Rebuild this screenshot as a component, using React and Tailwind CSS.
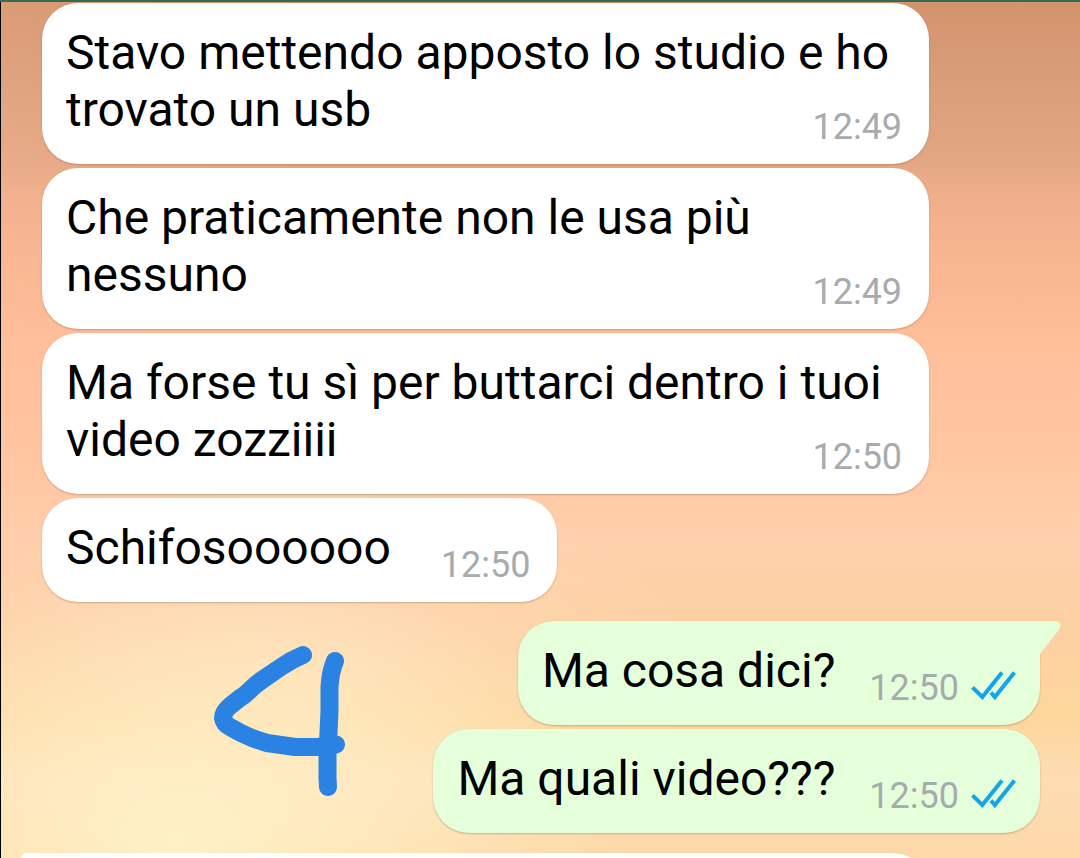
import React from 'react';
import clsx from 'clsx';

const messages = [
    { id: 1, from: 'them', text: 'Stavo mettendo apposto lo studio e ho trovato un usb', time: '12:49' },
    { id: 2, from: 'them', text: 'Che praticamente non le usa più nessuno', time: '12:49' },
    { id: 3, from: 'them', text: 'Ma forse tu sì per buttarci dentro i tuoi video zozziiii', time: '12:50' },
    { id: 4, from: 'them', text: 'Schifosoooooo', time: '12:50' },
    { id: 5, from: 'me', text: 'Ma cosa dici?', time: '12:50', first: true },
    { id: 6, from: 'me', text: 'Ma quali video???', time: '12:50' },
];

const ReadTicks = () => (
    <svg
        className="w-[45px] h-[34px]"
        viewBox="0 0 45 34"
        fill="none"
        stroke="#12a5ea"
        strokeWidth="4"
        role="img"
        aria-label="Letto"
    >
        <path d="M1.5 16.3 L11.3 26 L31 1.5" />
        <path d="M20 21.5 L23.8 26 L43.5 1.5" />
    </svg>
);

const Tail = ({ side }) => (
    <svg
        className={clsx(
            'absolute top-0 w-[22px] h-[34px]',
            side === 'right' ? '-right-[21px]' : '-left-[21px] -scale-x-100'
        )}
        viewBox="0 0 22 34"
        fill={side === 'right' ? '#e5ffdb' : '#ffffff'}
        aria-hidden="true"
    >
        <path d="M0 0 H17 Q21 0.5 21.3 4 Q21.3 6.5 20 8.5 L1 33 H0 Z" />
    </svg>
);

const Bubble = ({ message }) => {
    const mine = message.from === 'me';

    return (
        <div
            className={clsx(
                'relative max-w-8/9 pt-[21px] pb-[17px] pl-6 shadow-[0_1px_2px_rgba(120,80,40,0.35)]',
                mine ? 'self-end bg-[#e5ffdb] pr-6' : 'self-start bg-white pr-[27px]',
                message.first ? 'rounded-[36px] rounded-tr-none mt-[15px]' : 'rounded-[36px]'
            )}
        >
            {message.first && <Tail side="right" />}
            <p className="text-[48px] leading-[57px] text-black">
                {message.text}
                <span
                    className={clsx(
                        'float-right mt-[26px] flex items-center gap-3 text-[36px] leading-10 text-[#a6abae]',
                        mine ? 'ml-[34px]' : 'ml-[50px]'
                    )}
                >
                    <time>{message.time}</time>
                    {mine && <ReadTicks />}
                </span>
            </p>
        </div>
    );
};

// Freehand "4" drawn over the chat
const Scribble = () => (
    <svg
        className="absolute left-[210px] top-[638px] w-[140px] h-[160px]"
        viewBox="210 640 140 160"
        fill="none"
        stroke="#2a83e2"
        strokeWidth="18"
        strokeLinecap="round"
        strokeLinejoin="round"
        aria-hidden="true"
    >
        <path d="M303 655 Q291 660 281 667 L262 680 Q256 684 250 690 Q245 695 240 698 L230 706 Q223 712 223 718 Q224 724 230 727 Q240 733 252 738 Q260 741 267 743 L295 747 H318 L336 744.5" />
        <path d="M335 661 Q330.5 671 329.500 687 V710 L328.500 733 L327.500 753 V778 L328 787" />
    </svg>
);

const App = () => {
    return (
        <main className="relative h-screen overflow-hidden border-t-2 border-t-[#356b50] bg-[radial-gradient(ellipse_460px_280px_at_16%_98%,rgba(255,248,205,0.8),transparent),radial-gradient(ellipse_420px_200px_at_26%_78%,rgba(255,232,205,0.5),transparent),linear-gradient(to_right,rgba(255,190,160,0.18),transparent_30%),linear-gradient(to_bottom,#d2946d_0%,#d99d78_9%,#e4a784_19%,#f1ae8c_23%,#fab892_33%,#ffc09a_41%,#ffc6a0_52%,#ffd0ac_63%,#fdd0a4_72%,#fdd79c_84%,#fedcb4_91%,#fdd8a8_100%)] font-[Roboto,sans-serif]">
            <div className="min-h-full border-l border-black pl-[41px] pr-10 pt-px flex flex-col gap-1">
                {messages.map((message) => (
                    <Bubble key={message.id} message={message} />
                ))}

                {/* Next incoming message, cut off by the bottom of the screen */}
                <div className="relative mt-4 h-40 w-8/9 rounded-[36px] rounded-tl-none bg-white shadow-[0_1px_2px_rgba(120,80,40,0.35)]">
                    <Tail side="left" />
                </div>
            </div>
            <Scribble />
        </main>
    );
};

export default App;
